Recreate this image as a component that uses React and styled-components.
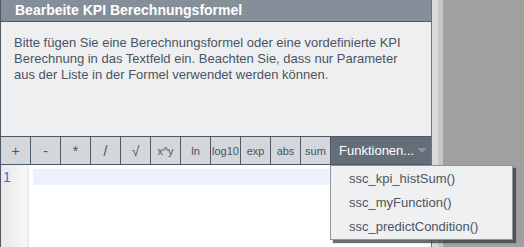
import React from "react";
import styled, { createGlobalStyle } from "styled-components";

const GlobalStyle = createGlobalStyle`
  html, body {
    margin: 0;
    padding: 0;
    background: #a0a0a0;
    font-family: "Liberation Sans", Arial, sans-serif;
  }
`;

const Page = styled.div`
  display: flex;
  height: 247px;
  overflow: hidden;
`;

const Dialog = styled.div`
  position: relative;
  display: flex;
  flex-direction: column;
  width: 432px;
  flex-shrink: 0;
  box-sizing: border-box;
  border-left: 1px solid #4f5964;
  border-right: 1px solid #1e88e5;
  background: #eeeff1;
  box-shadow: 6px 0 0 #d9d9d9, 11px 0 0 #c6c6c6;
`;

const TitleBar = styled.div`
  height: 21px;
  line-height: 21px;
  padding-left: 14px;
  background: #848f9a;
  border-bottom: 1px solid #4f5964;
  color: #ffffff;
  font-size: 14px;
  font-weight: bold;
`;

const Description = styled.div`
  height: 114px;
  box-sizing: border-box;
  padding: 13px 16px 0 13px;
  font-size: 13px;
  line-height: 16px;
  color: #4b5461;
`;

const Toolbar = styled.div`
  display: flex;
  height: 27px;
  border-top: 1px solid #4f5964;
  border-bottom: 1px solid #4f5964;
`;

const OpButton = styled.div`
  width: 30px;
  flex-shrink: 0;
  box-sizing: border-box;
  border-right: 1px solid #4f5964;
  background: #d3d6da;
  color: #4b5461;
  font-size: ${(p) => (p.$small ? "11px" : "14px")};
  display: flex;
  align-items: center;
  justify-content: center;
`;

const FunctionsButton = styled.div`
  position: relative;
  flex: 1;
  display: flex;
  align-items: center;
  justify-content: space-between;
  padding: 0 4px 0 8px;
  background: #646e79;
  color: #ffffff;
  font-size: 13px;
`;

const Menu = styled.div`
  position: absolute;
  top: 28px;
  left: -1px;
  width: 183px;
  box-sizing: border-box;
  padding-top: 1px;
  background: #eff0f2;
  border: 1px solid #8e959c;
  box-shadow: 3px 3px 1px rgba(55, 60, 66, 0.75);
  z-index: 2;
`;

const MenuItem = styled.div`
  height: 24px;
  line-height: 24px;
  padding-left: 18px;
  color: #4b5461;
  font-size: 13px;
`;

const Editor = styled.div`
  flex: 1;
  display: flex;
  background: #ffffff;
`;

const Gutter = styled.div`
  width: 28px;
  box-sizing: border-box;
  padding: 4px 0 0 2px;
  background: linear-gradient(to right, #e8e8e8, #f8f8f8);
  border-right: 2px solid #ececec;
  color: #1f7ad8;
  font-size: 14px;
  line-height: 16px;
`;

const Content = styled.div`
  flex: 1;
  padding: 4px 0 0 4px;
`;

const ActiveLine = styled.div`
  height: 16px;
  background: #edf1fd;
`;

const ops = [
  { label: "+" },
  { label: "-" },
  { label: "*" },
  { label: "/" },
  { label: "√" },
  { label: "x^y", small: true },
  { label: "ln", small: true },
  { label: "log10", small: true },
  { label: "exp", small: true },
  { label: "abs", small: true },
  { label: "sum", small: true },
];

const functions = ["ssc_kpi_histSum()", "ssc_myFunction()", "ssc_predictCondition()"];

export default function App() {
  return (
    <Page>
      <GlobalStyle />
      <Dialog>
        <TitleBar>Bearbeite KPI Berechnungsformel</TitleBar>
        <Description>
          Bitte fügen Sie eine Berechnungsformel oder eine vordefinierte KPI
          Berechnung in das Textfeld ein. Beachten Sie, dass nur Parameter aus
          der Liste in der Formel verwendet werden können.
        </Description>
        <Toolbar>
          {ops.map((op) => (
            <OpButton key={op.label} $small={op.small}>
              {op.label}
            </OpButton>
          ))}
          <FunctionsButton>
            <span>Funktionen...</span>
            <svg width="10" height="6" viewBox="0 0 10 6">
              <polygon points="0,0 10,0 5,5" fill="#8a939c" />
            </svg>
            <Menu>
              {functions.map((f) => (
                <MenuItem key={f}>{f}</MenuItem>
              ))}
            </Menu>
          </FunctionsButton>
        </Toolbar>
        <Editor>
          <Gutter>1</Gutter>
          <Content>
            <ActiveLine />
          </Content>
        </Editor>
      </Dialog>
    </Page>
  );
}
